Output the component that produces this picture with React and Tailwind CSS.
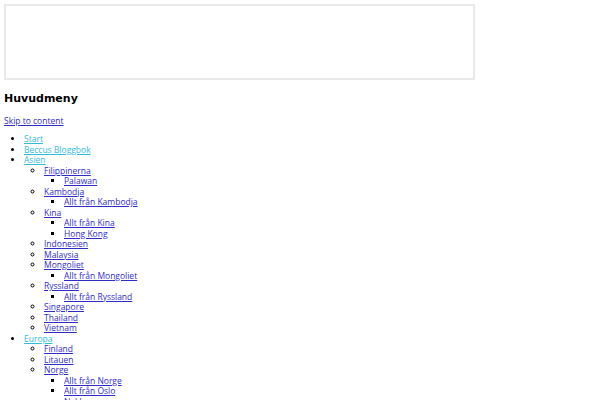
import React from 'react';

const menu = [
  { label: 'Start' },
  { label: 'Beccus Bloggbok' },
  {
    label: 'Asien',
    children: [
      { label: 'Filippinerna', children: [{ label: 'Palawan' }] },
      { label: 'Kambodja', children: [{ label: 'Allt från Kambodja' }] },
      { label: 'Kina', children: [{ label: 'Allt från Kina' }, { label: 'Hong Kong' }] },
      { label: 'Indonesien' },
      { label: 'Malaysia' },
      { label: 'Mongoliet', children: [{ label: 'Allt från Mongoliet' }] },
      { label: 'Ryssland', children: [{ label: 'Allt från Ryssland' }] },
      { label: 'Singapore' },
      { label: 'Thailand' },
      { label: 'Vietnam' },
    ],
  },
  {
    label: 'Europa',
    children: [
      { label: 'Finland' },
      { label: 'Litauen' },
      {
        label: 'Norge',
        children: [{ label: 'Allt från Norge' }, { label: 'Allt från Oslo' }, { label: 'Nakkvegen' }],
      },
      { label: 'Sverige' },
    ],
  },
];

const listStyles = ['list-disc', 'list-[circle]', 'list-[square]'];
const linkStyles = ['text-[#33bbdd]', 'text-[#2f2ccc]', 'text-[#2f2ccc]'];

function MenuList({ items, depth = 0 }) {
  return (
    <ul className={`${listStyles[depth]} pl-5`}>
      {items.map((item) => (
        <li key={item.label} className="leading-[10.5px]">
          <a href="#" className={`${linkStyles[depth]} underline`}>
            {item.label}
          </a>
          {item.children && <MenuList items={item.children} depth={depth + 1} />}
        </li>
      ))}
    </ul>
  );
}

export default function App() {
  return (
    <div className="h-[400px] overflow-hidden bg-white p-1 font-['Open_Sans',sans-serif] text-[8.5px] text-black">
      <div className="h-[76px] w-[471px] border-2 border-[#e8e8e8] bg-white"></div>
      <h2 className="mt-[12px] font-['DejaVu_Sans',sans-serif] text-[11px] font-bold leading-[14px]">Huvudmeny</h2>
      <a href="#" className="mt-[9px] block w-fit text-[#2f2ccc] underline leading-[12px]">
        Skip to content
      </a>
      <div className="mt-[7px]">
        <MenuList items={menu} />
      </div>
    </div>
  );
}
